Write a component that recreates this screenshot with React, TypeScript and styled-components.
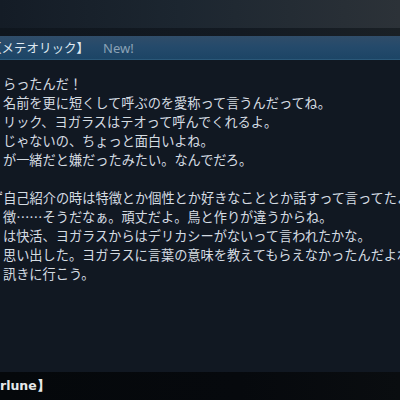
import React from "react";
import styled, { createGlobalStyle } from "styled-components";

const Global = createGlobalStyle`
  html, body { margin: 0; padding: 0; background: #111822; }
  #root { width: 400px; height: 400px; overflow: hidden; }
`;

const Screen = styled.div`
  width: 400px;
  height: 400px;
  display: flex;
  flex-direction: column;
  overflow: hidden;
  background: #111822;
  font-family: "Noto Sans CJK JP", "Noto Sans", sans-serif;
`;

const TopBar = styled.div`
  height: 28px;
  flex: none;
  background: linear-gradient(90deg, #141c26 0%, #1c2630 45%, #2c3238 100%);
`;

const TopShade = styled.div`
  height: 8px;
  flex: none;
  background: linear-gradient(90deg, #0f161e 0%, #131a22 60%, #1a2025 100%);
`;

const Header = styled.div`
  height: 24px;
  flex: none;
  display: flex;
  align-items: center;
  gap: 14px;
  background: linear-gradient(180deg, #304d69 0%, #254a6b 45%, #1c4566 100%);
  border-bottom: 1px solid #2b5878;
  box-sizing: border-box;
  white-space: nowrap;
  overflow: hidden;
`;

const Title = styled.span`
  margin-left: -11px;
  font-size: 12.5px;
  color: #dfe8f0;
`;

const NewTag = styled.span`
  font-family: "Noto Sans", "Open Sans", sans-serif;
  font-size: 13px;
  color: #8ba2b6;
`;

const Body = styled.div`
  flex: 1;
  padding: 14px 0 0 3px;
  display: flex;
  flex-direction: column;
  background: #111822;
  overflow: hidden;
`;

const Line = styled.div<{ $indent?: number }>`
  font-size: 13.2px;
  line-height: 19px;
  height: 19px;
  color: #d5dce2;
  white-space: nowrap;
  text-indent: ${(p) => (p.$indent ? `${p.$indent}px` : "0")};
`;

const Gap = styled.div`
  height: 19px;
`;

const Footer = styled.div`
  height: 28px;
  flex: none;
  display: flex;
  align-items: center;
  background: linear-gradient(90deg, #05080b 0%, #06090d 60%, #0a0d10 100%);
  white-space: nowrap;
  overflow: hidden;
`;

const Speaker = styled.span`
  font-family: "DejaVu Sans", "Noto Sans", sans-serif;
  font-weight: bold;
  font-size: 12.5px;
  color: #e6e8ea;
`;

const firstBlock = [
  "らったんだ！",
  "名前を更に短くして呼ぶのを愛称って言うんだってね。",
  "リック、ヨガラスはテオって呼んでくれるよ。",
  "じゃないの、ちょっと面白いよね。",
  "が一緒だと嫌だったみたい。なんでだろ。",
];

const secondBlock = [
  "徴……そうだなぁ。頑丈だよ。鳥と作りが違うからね。",
  "は快活、ヨガラスからはデリカシーがないって言われたかな。",
  "思い出した。ヨガラスに言葉の意味を教えてもらえなかったんだよね。",
  "訊きに行こう。",
];

export default function App() {
  return (
    <>
      <Global />
      <Screen>
        <TopBar />
        <TopShade />
        <Header>
          <Title>【メテオリック】</Title>
          <NewTag>New!</NewTag>
        </Header>
        <Body>
          {firstBlock.map((t) => (
            <Line key={t}>{t}</Line>
          ))}
          <Gap />
          <Line $indent={-13}>ず自己紹介の時は特徴とか個性とか好きなこととか話すって言ってたよ。</Line>
          {secondBlock.map((t) => (
            <Line key={t}>{t}</Line>
          ))}
        </Body>
        <Footer>
          <Speaker>rlune】</Speaker>
        </Footer>
      </Screen>
    </>
  );
}
